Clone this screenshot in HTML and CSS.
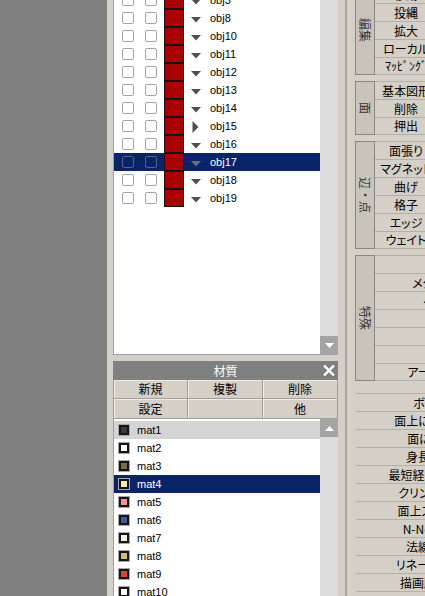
FILE: index.html
```html
<!DOCTYPE html>
<html lang="ja">
<head>
<meta charset="utf-8">
<title>Metasequoia panels</title>
<link rel="stylesheet" href="styles.css">
</head>
<body>
<div class="app">
  <div class="desk"></div>

  <div class="side">
    <div class="objpanel">
      <div class="objlist">
        <div class="rows">
          <div class="orow"><span class="cb"></span><span class="cb cb2"></span><span class="col"></span><svg class="tri" width="10" height="18"><polygon points="0,8 10,8 5,13.5"/></svg><span class="oname">obj3</span></div>
          <div class="orow"><span class="cb"></span><span class="cb cb2"></span><span class="col"></span><svg class="tri" width="10" height="18"><polygon points="0,8 10,8 5,13.5"/></svg><span class="oname">obj8</span></div>
          <div class="orow"><span class="cb"></span><span class="cb cb2"></span><span class="col"></span><svg class="tri" width="10" height="18"><polygon points="0,8 10,8 5,13.5"/></svg><span class="oname">obj10</span></div>
          <div class="orow"><span class="cb"></span><span class="cb cb2"></span><span class="col"></span><svg class="tri" width="10" height="18"><polygon points="0,8 10,8 5,13.5"/></svg><span class="oname">obj11</span></div>
          <div class="orow"><span class="cb"></span><span class="cb cb2"></span><span class="col"></span><svg class="tri" width="10" height="18"><polygon points="0,8 10,8 5,13.5"/></svg><span class="oname">obj12</span></div>
          <div class="orow"><span class="cb"></span><span class="cb cb2"></span><span class="col"></span><svg class="tri" width="10" height="18"><polygon points="0,8 10,8 5,13.5"/></svg><span class="oname">obj13</span></div>
          <div class="orow"><span class="cb"></span><span class="cb cb2"></span><span class="col"></span><svg class="tri" width="10" height="18"><polygon points="0,8 10,8 5,13.5"/></svg><span class="oname">obj14</span></div>
          <div class="orow"><span class="cb"></span><span class="cb cb2"></span><span class="col"></span><svg class="tri" width="10" height="18"><polygon points="1.5,4 7.5,10 1.5,16"/></svg><span class="oname">obj15</span></div>
          <div class="orow"><span class="cb"></span><span class="cb cb2"></span><span class="col"></span><svg class="tri" width="10" height="18"><polygon points="0,8 10,8 5,13.5"/></svg><span class="oname">obj16</span></div>
          <div class="orow sel"><span class="cb"></span><span class="cb cb2"></span><span class="col"></span><svg class="tri" width="10" height="18"><polygon points="0,8 10,8 5,13.5"/></svg><span class="oname">obj17</span></div>
          <div class="orow"><span class="cb"></span><span class="cb cb2"></span><span class="col"></span><svg class="tri" width="10" height="18"><polygon points="0,8 10,8 5,13.5"/></svg><span class="oname">obj18</span></div>
          <div class="orow"><span class="cb"></span><span class="cb cb2"></span><span class="col"></span><svg class="tri" width="10" height="18"><polygon points="0,8 10,8 5,13.5"/></svg><span class="oname">obj19</span></div>
        </div>
      </div>
      <div class="vscroll">
        <div class="track"></div>
        <div class="sbtn"><svg width="9" height="5"><polygon points="0,0 9,0 4.5,5" fill="#fff"/></svg></div>
      </div>
    </div>

    <div class="matpanel">
      <div class="mathead">
        <span class="htitle">材質</span>
        <svg class="close" width="12" height="11" viewBox="0 0 12 11"><path d="M1 0.5 L11 10.5 M11 0.5 L1 10.5" stroke="#fff" stroke-width="2.4"/></svg>
      </div>
      <div class="matbtns">
        <div class="mbtn first">新規</div>
        <div class="mbtn">複製</div>
        <div class="mbtn">削除</div>
        <div class="mbtn first">設定</div>
        <div class="mbtn"></div>
        <div class="mbtn">他</div>
      </div>
      <div class="matwrap">
        <div class="matlist">
          <div class="mrow hover"><span class="sw" style="background:#3a3a3a"></span><span class="mname">mat1</span></div>
          <div class="mrow"><span class="sw" style="background:#ffffff"></span><span class="mname">mat2</span></div>
          <div class="mrow"><span class="sw" style="background:#7b6b4a"></span><span class="mname">mat3</span></div>
          <div class="mrow sel"><span class="sw" style="background:#f6eaa8"></span><span class="mname">mat4</span></div>
          <div class="mrow"><span class="sw" style="background:#f4909a"></span><span class="mname">mat5</span></div>
          <div class="mrow"><span class="sw" style="background:#3d5a9a"></span><span class="mname">mat6</span></div>
          <div class="mrow"><span class="sw" style="background:#fdf2e2"></span><span class="mname">mat7</span></div>
          <div class="mrow"><span class="sw" style="background:#d4c068"></span><span class="mname">mat8</span></div>
          <div class="mrow"><span class="sw" style="background:#ec3c2a"></span><span class="mname">mat9</span></div>
          <div class="mrow"><span class="sw" style="background:#ffffff"></span><span class="mname">mat10</span></div>
        </div>
        <div class="vscroll">
          <div class="sbtn"><svg width="9" height="5"><polygon points="0,5 9,5 4.5,0" fill="#fff"/></svg></div>
          <div class="track"></div>
        </div>
      </div>
    </div>
  </div>

  <div class="gutter"><div class="vline"></div></div>

  <div class="cmd">
    <div class="grp">
      <div class="lbl r5"><span class="vt">編集</span></div>
      <div class="btns w62">
        <div class="btn">移動</div>
        <div class="btn">投縄</div>
        <div class="btn">拡大</div>
        <div class="btn">ローカル</div>
        <div class="btn last">ﾏｯﾋﾟﾝｸﾞ</div>
      </div>
    </div>
    <div class="grp gap6">
      <div class="lbl r3"><span class="vt">面</span></div>
      <div class="btns w62">
        <div class="btn">基本図形</div>
        <div class="btn">削除</div>
        <div class="btn last">押出</div>
      </div>
    </div>
    <div class="grp gap6">
      <div class="lbl r6"><span class="vt">辺・点</span></div>
      <div class="btns w62">
        <div class="btn">面張り</div>
        <div class="btn">マグネット</div>
        <div class="btn">曲げ</div>
        <div class="btn">格子</div>
        <div class="btn">エッジ</div>
        <div class="btn last">ウェイト</div>
      </div>
    </div>
    <div class="grp gap6">
      <div class="lbl r7"><span class="vt">特殊</span></div>
      <div class="btns w130">
        <div class="btn">結合</div>
        <div class="btn">メタボール</div>
        <div class="btn">ヘルプ</div>
        <div class="btn">厚み</div>
        <div class="btn">分割</div>
        <div class="btn">回転</div>
        <div class="btn last">アーマチュア</div>
      </div>
    </div>
    <div class="grp gap12 plug">
      <div class="btns w148">
        <div class="btn">ボーン</div>
        <div class="btn">面上に点追加</div>
        <div class="btn">面に沿う</div>
        <div class="btn">身長計測</div>
        <div class="btn">最短経路を選択</div>
        <div class="btn">クリンナップ</div>
        <div class="btn">面上スライド</div>
        <div class="btn">N-Normal</div>
        <div class="btn">法線編集</div>
        <div class="btn">リネーム一括</div>
        <div class="btn">描画順変更</div>
        <div class="btn">ミラー</div>
      </div>
    </div>
  </div>
</div>
</body>
</html>
```

FILE: styles.css
```css
html, body {
  margin: 0;
  padding: 0;
}
body {
  width: 425px;
  height: 596px;
  overflow: hidden;
  background: #d4d0c8;
  font-family: "Noto Sans CJK JP", "Liberation Sans", sans-serif;
  font-size: 12px;
  color: #000;
}
.app {
  display: flex;
  height: 596px;
  overflow: hidden;
}
.desk {
  width: 107px;
  flex: none;
  background: #808080;
}
.side {
  width: 231px;
  flex: none;
  box-sizing: border-box;
  padding-left: 6px;
  display: flex;
  flex-direction: column;
}

/* object list */
.objpanel {
  height: 355px;
  flex: none;
  display: flex;
  box-sizing: border-box;
  border-left: 1px solid #a0a0a0;
  border-bottom: 1px solid #a0a0a0;
}
.objlist {
  flex: 1;
  background: #fff;
  overflow: hidden;
}
.rows {
  margin-top: -9px;
}
.orow {
  height: 18px;
  display: flex;
  align-items: center;
  padding-left: 8px;
  font-family: "Liberation Sans", "Noto Sans CJK JP", sans-serif;
  font-size: 11px;
}
.cb {
  width: 12px;
  height: 12px;
  box-sizing: border-box;
  border: 1px solid #a4a4a4;
  border-radius: 2px;
  background: #fff;
  flex: none;
}
.cb2 {
  margin-left: 11px;
}
.col {
  width: 20px;
  height: 18px;
  box-sizing: border-box;
  border: 1px solid #141414;
  background: #aa0000;
  margin-left: 7px;
  flex: none;
}
.tri {
  margin-left: 7px;
  flex: none;
  fill: #505050;
}
.oname {
  margin-left: 9px;
  line-height: 18px;
}
.orow.sel {
  background: #0a246a;
  color: #fff;
}
.orow.sel .cb {
  background: transparent;
  border-color: #56607e;
}
.orow.sel .tri {
  fill: #6e6e6e;
}

/* scrollbars */
.vscroll {
  width: 18px;
  flex: none;
  background: #dcdcdc;
  display: flex;
  flex-direction: column;
}
.track {
  flex: 1;
}
.sbtn {
  height: 18px;
  flex: none;
  background: #a4a4a4;
  display: flex;
  align-items: center;
  justify-content: center;
}

/* material panel */
.matpanel {
  margin-top: 6px;
  flex: 1;
  min-height: 0;
  display: flex;
  flex-direction: column;
}
.mathead {
  height: 19px;
  flex: none;
  background: #808080;
  color: #fff;
  display: grid;
  grid-template-columns: 1fr auto 1fr;
  align-items: center;
}
.htitle {
  grid-column: 2;
  line-height: 19px;
}
.close {
  grid-column: 3;
  justify-self: end;
  margin-right: 3px;
}
.matbtns {
  display: grid;
  grid-template-columns: repeat(3, 75px);
  grid-template-rows: 19px 20px;
  flex: none;
}
.mbtn {
  box-sizing: border-box;
  border-right: 1px solid #a29e96;
  border-bottom: 1px solid #a29e96;
  box-shadow: inset 1px 1px 0 #f2eee6;
  display: flex;
  align-items: center;
  justify-content: center;
  line-height: 1;
}
.mbtn.first {
  border-left: 1px solid #a29e96;
}
.matwrap {
  flex: 1;
  min-height: 0;
  display: flex;
  border-left: 1px solid #a0a0a0;
}
.matlist {
  flex: 1;
  background: #fff;
  padding-top: 2px;
  overflow: hidden;
}
.mrow {
  height: 18px;
  display: flex;
  align-items: center;
  font-family: "Liberation Sans", "Noto Sans CJK JP", sans-serif;
  font-size: 11px;
}
.mrow.hover {
  background: #d4d4d4;
}
.mrow.sel {
  background: #0a246a;
  color: #fff;
}
.sw {
  width: 10px;
  height: 10px;
  box-sizing: border-box;
  border: 2px solid #141414;
  box-shadow: 0 0 0 1px #a8a8a8;
  margin-left: 5px;
  flex: none;
}
.mname {
  margin-left: 8px;
  line-height: 18px;
}

/* gutter */
.gutter {
  width: 17px;
  flex: none;
}
.vline {
  margin-left: 7px;
  width: 2px;
  height: 100%;
  background: #a8a49c;
}

/* command panel */
.cmd {
  flex: none;
  width: 200px;
  margin-top: -15px;
  display: flex;
  flex-direction: column;
}
.grp {
  display: flex;
  flex: none;
}
.gap6 {
  margin-top: 6px;
}
.gap12 {
  margin-top: 12px;
}
.plug {
  margin-left: 1px;
}
.lbl {
  width: 20px;
  flex: none;
  box-sizing: border-box;
  border: 1px solid #8c8880;
  background: #c8c4bc;
  display: flex;
  align-items: center;
  justify-content: center;
  color: #333;
}
.r3 { height: 54px; }
.r5 { height: 90px; }
.r6 { height: 108px; }
.r7 { height: 126px; }
.vt {
  writing-mode: vertical-rl;
  text-orientation: sideways;
  line-height: 1;
}
.btns {
  display: flex;
  flex-direction: column;
  flex: none;
}
.w62 { width: 62px; }
.w130 { width: 130px; }
.w148 { width: 148px; }
.btn {
  height: 18px;
  box-sizing: border-box;
  border-top: 1px solid #b4b0a8;
  text-align: center;
  line-height: 17px;
  white-space: nowrap;
  font-feature-settings: "palt";
}
.btn.last {
  border-bottom: 1px solid #b4b0a8;
  line-height: 16px;
}
```
